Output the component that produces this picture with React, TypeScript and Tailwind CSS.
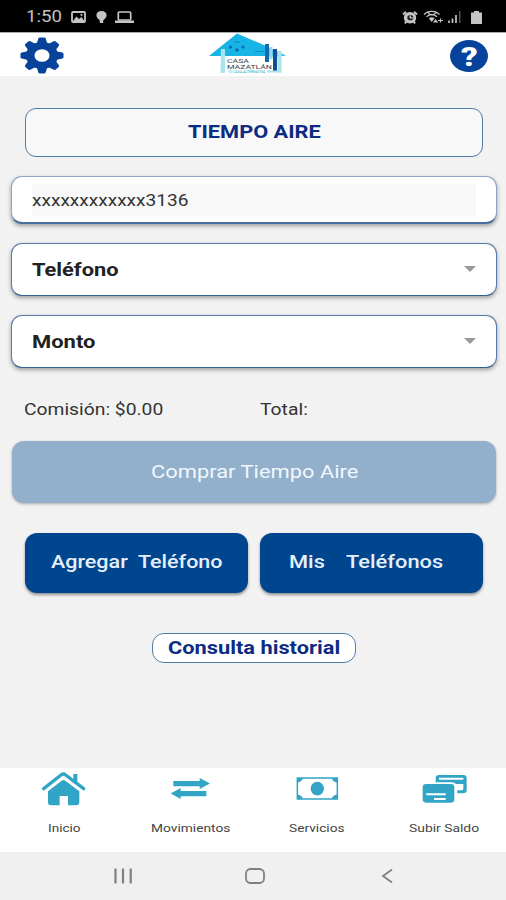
import React, { useLayoutEffect, useRef, useState } from 'react';

type WideTextProps = { children: string; width: number; className?: string };

// Widened Roboto: the glyphs are stretched horizontally to fill the given width
const WideText: React.FC<WideTextProps> = ({ children, width, className = '' }) => {
  const ref = useRef<HTMLSpanElement>(null);
  const [scale, setScale] = useState(1.18);

  useLayoutEffect(() => {
    if (ref.current) setScale(width / ref.current.offsetWidth);
  }, [width, children]);

  return (
    <span className={`block shrink-0 text-left ${className}`} style={{ width }}>
      <span ref={ref} className="inline-block origin-left whitespace-pre" style={{ transform: `scaleX(${scale})` }}>
        {children}
      </span>
    </span>
  );
};

const StatusBar = () => (
  <div className="flex h-8 items-center justify-between bg-black pl-[26px] pr-6 pt-[2px] text-[#c4c4c4]">
    <div className="flex items-center">
      <WideText width={36} className="text-[16px] leading-5">1:50</WideText>
      <svg className="ml-[9px] h-3 w-[15px]" viewBox="0 0 15 12">
        <rect x="1" y="1" width="13" height="10" rx="1" fill="none" stroke="currentColor" strokeWidth="1.8" />
        <path d="M2 10 5.5 5.5 8 8 10.5 6 13 9.5V10Z" fill="currentColor" />
        <circle cx="10.5" cy="3.8" r="1.1" fill="currentColor" />
      </svg>
      <svg className="ml-[10px] h-3 w-[11px]" viewBox="0 0 11 12">
        <path d="M5.5 0C2.3 0 .4 1.900.4 4.300c0 2.300 2 3.700 3.400 5.200V12h3.400V9.500c1.400-1.500 3.400-2.900 3.400-5.200C10.600 1.900 8.700 0 5.500 0Z" fill="currentColor" />
      </svg>
      <svg className="ml-[8px] h-3 w-[19px]" viewBox="0 0 19 12">
        <rect x="3.3" y="1" width="12.4" height="8" rx="1" fill="none" stroke="currentColor" strokeWidth="1.7" />
        <path d="M0 9.500h19V12H0Z" fill="currentColor" />
      </svg>
    </div>
    <div className="flex items-center">
      <svg className="h-[13px] w-4" viewBox="0 0 16 13">
        <path d="M1 3.500 4 .8M15 3.500 12 .8M3 12.500 4.500 10M13 12.500 11.500 10" stroke="currentColor" strokeWidth="2" />
        <ellipse cx="8" cy="6.7" rx="6.2" ry="5.8" fill="currentColor" />
        <ellipse cx="8.3" cy="6.7" rx="3" ry="2.6" fill="#222" />
        <path d="M8.300 4.500v2.400h2.500" fill="none" stroke="currentColor" strokeWidth="1.3" />
      </svg>
      <svg className="ml-[5px] h-[14px] w-5" viewBox="0 0 20 14">
        <path d="M1 4.500C5 .3 12.500.3 16.500 4.500M3.500 6.800c3-2.800 7.500-2.800 10.500 0M5 2.500c2 3 6 3 8 0" fill="none" stroke="currentColor" strokeWidth="1.3" />
        <path d="M5.800 8.300c1.800-1.400 4-1.400 5.800 0L8.700 12Z" fill="currentColor" />
        <path d="m11 12 1.500-2 1.500 2ZM15 10.500h5M17.500 8.500v4" stroke="currentColor" strokeWidth="1.2" fill="currentColor" />
      </svg>
      <svg className="ml-[5px] h-3 w-[13px]" viewBox="0 0 13 12">
        <path d="M1 9.500V12M4.500 7.500V12M8 4V12" stroke="currentColor" strokeWidth="1.7" />
        <path d="M11.800 0V12" stroke="#666" strokeWidth="1.2" />
      </svg>
      <svg className="ml-[10px] h-[13px] w-[11px]" viewBox="0 0 11 13">
        <path d="M3 0h5v1.500h3V13H0V1.500h3Z" fill="currentColor" />
      </svg>
    </div>
  </div>
);

const GearIcon = () => (
  <svg className="mt-[2px] h-[37px] w-11" viewBox="-22 -22 44 44" preserveAspectRatio="none">
    {[0, 45, 90, 135, 180, 225, 270, 315].map(a => (
      <path key={a} d="M-5.500-13-3.700-20.200Q-3.300-21.500-2-21.500H2Q3.300-21.500 3.700-20.200L5.500-13Z" fill="#07439a" transform={`rotate(${a})`} />
    ))}
    <circle r="11.8" fill="none" stroke="#07439a" strokeWidth="8.5" />
  </svg>
);

const Logo = () => (
  <svg className="h-[43px] w-20" viewBox="207 32 80 43">
    <path d="M237 32.500 209 55H221V50H225V55H265V44.500Z" fill="#16b5e6" />
    <path d="M269 47 286 54.500 280 55.500H269Z" fill="#25bfe8" />
    <path d="M221 48H225V72H220.500Z" fill="#a9e3ee" />
    <path d="M265 43H269V61H265Z" fill="#1769ae" />
    <path d="M269.500 46H272.500V58H269.500Z" fill="#8ed9ee" />
    <path d="M273 48H277V70.500H273Z" fill="#104f91" />
    <path d="M277.500 50H281.500V71.500H277.500Z" fill="#abe3ee" />
    <path d="M267 69.500H281.500V71.500H267Z" fill="#abe3ee" />
    <g fill="#0868b0">
      <circle cx="230.5" cy="46" r="1.6" />
      <circle cx="237" cy="49" r="1.7" />
      <circle cx="243" cy="46" r="1.6" />
    </g>
    <path d="M234 41.500q3-2 6 0M255 50.500H264" fill="none" stroke="#078dc6" strokeWidth="1" />
    <text x="227" y="61.5" fontSize="6" textLength="22" lengthAdjust="spacingAndGlyphs" fill="#34434c">CASA</text>
    <text x="227" y="67.7" fontSize="6" textLength="45" lengthAdjust="spacingAndGlyphs" fill="#34434c">MAZATLÁN</text>
    <text x="228" y="72.3" fontSize="4" textLength="37" lengthAdjust="spacingAndGlyphs" fill="#20afd0">TU CASA ALTERNATIVA</text>
  </svg>
);

const Header = () => (
  <div className="flex h-11 items-center justify-between border-t border-[#aaa] bg-white pl-5 pr-[18px]">
    <button><GearIcon /></button>
    <div className="mr-[20px]"><Logo /></div>
    <button className="mt-[3px] flex h-8 w-[38px] items-center justify-center rounded-[50%] bg-[#07439a] pt-[3px] text-[25px] leading-none font-black text-white">
      <WideText width={17}>?</WideText>
    </button>
  </div>
);

const SelectField: React.FC<{ label: string; width: number }> = ({ label, width }) => (
  <button className="flex h-[53px] w-full items-center justify-between rounded-[11px] border-[1.5px] border-[#557ba8] border-b-[#315f91] bg-white px-5 text-left shadow-[0_2px_4px_rgba(0,0,0,0.35)]">
    <WideText width={width} className="text-[17.5px] leading-6 font-bold text-[#222]">{label}</WideText>
    <svg className="mb-[2px] h-[6px] w-3" viewBox="0 0 12 6">
      <path d="M0 0H12L6 6Z" fill="#999" />
    </svg>
  </button>
);

const HomeIcon = () => (
  <svg className="h-10 w-12" viewBox="118 39 144 120" fill="#32a4c5">
    <path d="M221 57H233V83L221 74Z" />
    <path d="M132 101 184 60Q191 54 198 60L252 101" fill="none" stroke="#32a4c5" strokeWidth="10" strokeLinecap="round" />
    <path d="M145 109 186 77Q191 73 197 77L239 109V142Q239 151 230 151H205V123H180V151H154Q145 151 145 142Z" />
  </svg>
);

const ArrowsIcon = () => (
  <svg className="h-10 w-12" viewBox="497 39 144 120" fill="#32a4c5">
    <path d="M519 78H598V69L629 85.500 598 102V94H519Z" />
    <path d="M618 108H541V99L511 115.500 541 132V124H618Z" />
  </svg>
);

const MoneyIcon = () => (
  <svg className="h-10 w-12" viewBox="118 39 144 120" fill="#32a4c5">
    <rect x="134" y="69" width="120" height="63" fill="none" stroke="#32a4c5" strokeWidth="4.5" />
    <path d="M134 69H151Q148 80 134 83ZM254 69V83Q240 80 237 69ZM134 132V118Q148 121 151 132ZM254 132H237Q240 121 254 118Z" />
    <ellipse cx="194" cy="101" rx="20" ry="20.5" />
  </svg>
);

const CardsIcon = () => (
  <svg className="h-10 w-12" viewBox="497 39 144 120" fill="#32a4c5">
    <path fillRule="evenodd" d="M557 60H630Q640 60 640 69V105Q640 115 629 115H612V106H625Q630 106 630 101V87H608Q604 82 596 82H547V69Q547 60 557 60ZM557 68V74H630V68Z" />
    <path fillRule="evenodd" d="M518 87H593Q603 87 603 97V133Q603 143 593 143H518Q508 143 508 133V97Q508 87 518 87ZM519 115V121H577V115ZM542 129V135H577V129Z" />
  </svg>
);

const navItems = [
  { label: 'Inicio', width: 33, icon: <HomeIcon /> },
  { label: 'Movimientos', width: 79, icon: <ArrowsIcon /> },
  { label: 'Servicios', width: 56, icon: <MoneyIcon /> },
  { label: 'Subir Saldo', width: 70, icon: <CardsIcon /> },
];

const BottomNav = () => (
  <div className="grid h-[84px] grid-cols-4 bg-white">
    {navItems.map(item => (
      <button key={item.label} className="flex flex-col items-center">
        {item.icon}
        <div className="mt-3 pl-[2px]">
          <WideText width={item.width} className="text-[11.5px] leading-4 text-[#444]">{item.label}</WideText>
        </div>
      </button>
    ))}
  </div>
);

const SystemBar = () => (
  <div className="flex h-12 items-center bg-[#f0f0f0] pl-[113px] text-[#808080]">
    <svg className="h-4 w-5" viewBox="0 0 20 16">
      <path d="M2.500.5V15.500M10 .5V15.500M17.700.5V15.500" stroke="currentColor" strokeWidth="2.2" />
    </svg>
    <svg className="ml-28 h-4 w-5" viewBox="0 0 20 16">
      <rect x="1" y="1" width="18" height="14" rx="4.5" fill="none" stroke="currentColor" strokeWidth="1.8" />
    </svg>
    <svg className="ml-[116px] h-4 w-3" viewBox="0 0 12 16">
      <path d="M11 1.500 2 8 11 14.500" fill="none" stroke="currentColor" strokeWidth="1.8" />
    </svg>
  </div>
);

export default function App() {
  return (
    <div className="flex h-[900px] w-[506px] flex-col overflow-hidden bg-[#f2f2f2] font-['Roboto',sans-serif]">
      <StatusBar />
      <Header />

      <main className="flex flex-1 flex-col px-[11px] pt-8">
        <div className="ml-[14px] mr-3 flex h-[49px] items-center justify-center rounded-[11px] border-[1.5px] border-[#4f7da6] bg-[#f8f8f8] pb-px text-[#0b2c82]">
          <WideText width={133} className="text-[18px] leading-6 font-bold">TIEMPO AIRE</WideText>
        </div>

        <div className="mt-[19px] mr-[-2px] flex h-12 items-center rounded-[11px] border-[1.5px] border-[#8ba5c6] border-b-2 border-b-[#456f9b] bg-white px-5 shadow-[0_2px_4px_rgba(0,0,0,0.35)]">
          <div className="flex h-8 flex-1 items-center bg-[#f8f8f8] pt-[2px]">
            <WideText width={156} className="text-[16.5px] leading-6 text-[#333]">xxxxxxxxxxxx3136</WideText>
          </div>
        </div>

        <div className="mt-[19px] mr-[-2px] flex flex-col gap-[19px]">
          <SelectField label="Teléfono" width={86} />
          <SelectField label="Monto" width={64} />
        </div>

        <div className="mt-[30px] flex pl-[13px] text-[16.5px] leading-6 text-[#333]">
          <WideText width={139}>Comisión: $0.00</WideText>
          <WideText width={48} className="ml-[97px]">Total:</WideText>
        </div>

        <button className="mt-[19px] ml-px mr-[-1px] flex h-[62px] items-center justify-center rounded-[12px] bg-[#92afcb] text-[#f1f7fd] shadow-[0_1px_3px_rgba(0,0,0,0.3)]">
          <WideText width={207} className="text-[18.5px] leading-6">Comprar Tiempo Aire</WideText>
        </button>

        <div className="mt-[30px] ml-[14px] mr-3 grid grid-cols-2 gap-3 text-[18px] leading-6 font-medium text-[#e6effa]">
          <button className="flex h-[60px] items-center justify-center rounded-[12px] bg-[#00468f] pb-[3px] shadow-[0_2px_3px_rgba(0,0,0,0.4)]">
            <WideText width={172}>{'Agregar  Teléfono'}</WideText>
          </button>
          <button className="flex h-[60px] items-center rounded-[12px] bg-[#00468f] pb-[3px] pl-[29px] shadow-[0_2px_3px_rgba(0,0,0,0.4)]">
            <WideText width={154}>{'Mis    Teléfonos'}</WideText>
          </button>
        </div>

        <div className="mt-10 flex justify-center pl-px">
          <button className="flex h-[30px] w-[204px] items-center justify-center rounded-[12px] border border-[#4f7da6] bg-white text-[#0b2c82]">
            <WideText width={172} className="text-[18px] leading-6 font-bold">Consulta historial</WideText>
          </button>
        </div>
      </main>

      <BottomNav />
      <SystemBar />
    </div>
  );
}
